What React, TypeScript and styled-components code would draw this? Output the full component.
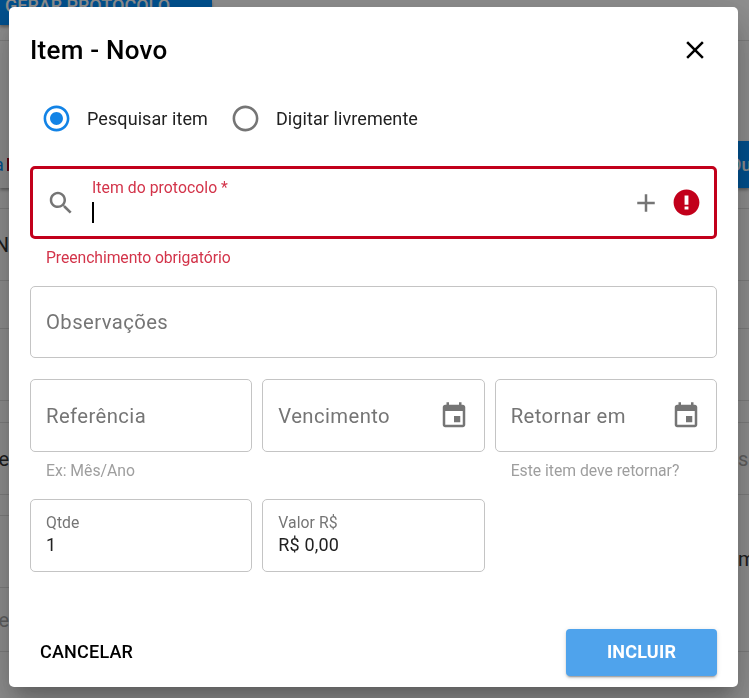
import React from "react";
import styled, { createGlobalStyle } from "styled-components";

const Global = createGlobalStyle`
  html, body { margin: 0; padding: 0; background: #fff; overflow: hidden; }
  * { box-sizing: border-box; }
  body { font-family: Roboto, "Liberation Sans", sans-serif; }
`;

const Page = styled.div`
  width: 749px;
  height: 698px;
  overflow: hidden;
  display: flex;
  flex-direction: column;
  background: #fff;
  font-size: 18px;
  color: #333;
`;

const TopStrip = styled.div`
  height: 41px;
  flex: none;
  border-bottom: 1px solid #e0e0e0;
`;

const TopButton = styled.div`
  width: 212px;
  height: 25px;
  background: #0090ff;
  color: #fff;
  font-weight: 500;
  font-size: 18px;
  line-height: 12px;
  padding-left: 5px;
  overflow: hidden;
  box-shadow: 0 2px 3px rgba(0, 0, 0, 0.35);
`;

const ToolStrip = styled.div`
  height: 168px;
  flex: none;
  padding-top: 100px;
  border-bottom: 1px solid #e0e0e0;
  display: flex;
  justify-content: space-between;
  align-items: flex-start;
`;

const GhostTool = styled.div`
  width: 60px;
  height: 47px;
  background: #fbfbfb;
  box-shadow: 0 2px 3px rgba(0, 0, 0, 0.35);
  display: flex;
  align-items: center;
  font-size: 18px;
  color: #0090ff;
  line-height: 1;
  text-indent: -6px;
`;

const GhostMark = styled.span`
  width: 3px;
  height: 13px;
  margin-left: 3px;
  background: #b0001a;
`;

const BlueTool = styled.div`
  width: 11px;
  height: 47px;
  background: #0090ff;
  color: #fff;
  font-weight: 500;
  line-height: 47px;
  white-space: nowrap;
  overflow: hidden;
  text-indent: -9px;
  box-shadow: 0 2px 3px rgba(0, 0, 0, 0.35);
`;

const Row = styled.div<{ $h: number }>`
  height: ${(p) => p.$h}px;
  flex: none;
  border-bottom: 1px solid #e0e0e0;
  display: flex;
  justify-content: space-between;
  align-items: center;
  line-height: 1;
  font-size: 20px;
`;

const PlainRow = styled.div<{ $h: number }>`
  height: ${(p) => p.$h}px;
  flex: none;
  border-bottom: 1px solid #e0e0e0;
`;

const LastRow = styled.div`
  height: 157px;
  flex: none;
  border-bottom: 1px solid #e0e0e0;
  display: flex;
  justify-content: space-between;
  align-items: flex-start;
`;

const EdgeColumn = styled.div`
  width: 9px;
  display: flex;
  flex-direction: column;
`;

const EdgeCell = styled.div<{ $h: number }>`
  height: ${(p) => p.$h}px;
  flex: none;
  border-bottom: 1px solid #e0e0e0;
  display: flex;
  align-items: center;
  font-size: 20px;
  color: #aaa;
  white-space: nowrap;
  overflow: hidden;
`;

const RightEdge = styled.span`
  width: 11px;
  overflow: hidden;
  white-space: nowrap;
  font-size: 20px;
  line-height: 1;
  margin-top: 54px;
`;

const LeftGlyph = styled.span`
  width: 9px;
  overflow: hidden;
  display: block;
  direction: rtl;
`;

const RightGlyph = styled.span`
  width: 11px;
  overflow: hidden;
  display: block;
  color: #aaa;
`;

const Backdrop = styled.div`
  position: fixed;
  inset: 0;
  background: rgba(0, 0, 0, 0.44);
`;

const Dialog = styled.section`
  position: fixed;
  left: 9px;
  top: 7px;
  width: 729px;
  height: 680px;
  background: #fff;
  border-radius: 5px;
  display: flex;
  flex-direction: column;
  padding: 0 21px 11px;
  color: #000;
  box-shadow: 0 11px 15px -7px rgba(0, 0, 0, 0.2), 0 24px 38px 3px rgba(0, 0, 0, 0.14),
    0 9px 46px 8px rgba(0, 0, 0, 0.12);
`;

const Header = styled.header`
  height: 86px;
  flex: none;
  display: flex;
  align-items: center;
  justify-content: space-between;
  padding-right: 7px;
`;

const Title = styled.h2`
  margin: 0;
  font-size: 26px;
  font-weight: 500;
  letter-spacing: 0.25px;
  color: #000;
`;

const Icon = styled.svg<{ $color?: string; $size?: number }>`
  width: ${(p) => p.$size ?? 30}px;
  height: ${(p) => p.$size ?? 30}px;
  fill: ${(p) => p.$color ?? "#757575"};
  flex: none;
  display: block;
`;

const RadioRow = styled.div`
  height: 50px;
  flex: none;
  display: flex;
  align-items: center;
  padding-left: 11px;
  margin-bottom: 23px;
`;

const RadioLabel = styled.span`
  font-size: 18px;
  letter-spacing: 0.08px;
  color: #212121;
  margin-left: 15px;
  margin-right: 22px;
`;

const Field = styled.div<{ $h?: number; $error?: boolean }>`
  height: ${(p) => p.$h ?? 73}px;
  border: ${(p) => (p.$error ? "3px solid #c2001b" : "1px solid #c4c4c4")};
  border-radius: 5px;
  display: flex;
  align-items: center;
  padding: 0 15px;
  min-width: 0;
`;

const ErrorField = styled(Field)`
  padding: 0 12px 0 13px;
`;

const ObservationField = styled(Field)`
  margin-top: 19px;
`;

const ErrorBody = styled.div`
  flex: 1;
  display: flex;
  flex-direction: column;
  align-items: flex-start;
  margin-left: 16px;
  margin-top: -4px;
`;

const ErrorLabel = styled.label`
  font-size: 15.75px;
  line-height: 18px;
  color: #d3344a;
  letter-spacing: 0.05px;
`;

const Caret = styled.span`
  width: 2px;
  height: 21px;
  margin-top: 5px;
  background: #000;
`;

const PlusSlot = styled.span`
  margin-right: 10px;
`;

const Helper = styled.p<{ $error?: boolean }>`
  margin: 0;
  padding-left: 16px;
  height: 19px;
  font-size: 15.75px;
  line-height: 19px;
  letter-spacing: ${(p) => (p.$error ? "-0.08px" : "-0.03px")};
  color: ${(p) => (p.$error ? "#d3344a" : "#9e9e9e")};
`;

const Placeholder = styled.span`
  flex: 1;
  font-size: 20.25px;
  letter-spacing: 0.42px;
  color: #757575;
`;

const Grid = styled.div<{ $gap?: number }>`
  display: grid;
  grid-template-columns: repeat(3, 1fr);
  column-gap: 10px;
  margin-top: ${(p) => p.$gap ?? 0}px;
`;

const HelperSlot = styled.div`
  padding-top: 9px;
`;

const FilledField = styled(Field)`
  flex-direction: column;
  align-items: flex-start;
  justify-content: center;
  padding-bottom: 2px;
`;

const SmallLabel = styled.span`
  font-size: 15.75px;
  line-height: 19px;
  margin-bottom: 1px;
  letter-spacing: 0.05px;
  color: #757575;
`;

const Value = styled.span`
  font-size: 18px;
  line-height: 24px;
  letter-spacing: 0.17px;
  color: #212121;
`;

const Footer = styled.footer`
  margin-top: auto;
  display: flex;
  justify-content: space-between;
  align-items: center;
`;

const CancelButton = styled.button`
  border: 0;
  background: transparent;
  padding: 0 10px 2px;
  height: 47px;
  font-family: inherit;
  font-size: 18px;
  font-weight: 500;
  letter-spacing: 0.2px;
  color: #000;
`;

const ConfirmButton = styled.button`
  width: 151px;
  height: 47px;
  border: 0;
  border-radius: 4px;
  padding: 0 0 2px;
  background: #4fa3ec;
  color: #fff;
  font-family: inherit;
  font-size: 18px;
  font-weight: 700;
  letter-spacing: 0.2px;
  box-shadow: 0 3px 1px -2px rgba(0, 0, 0, 0.2), 0 2px 2px 0 rgba(0, 0, 0, 0.14),
    0 1px 5px 0 rgba(0, 0, 0, 0.12);
`;

const paths = {
  close: "M19 6.41L17.59 5 12 10.59 6.41 5 5 6.41 10.59 12 5 17.59 6.41 19 12 13.41 17.59 19 19 17.59 13.41 12z",
  search:
    "M15.5 14h-.79l-.28-.27C15.41 12.59 16 11.11 16 9.5 16 5.91 13.09 3 9.5 3S3 5.91 3 9.5 5.91 16 9.5 16c1.61 0 3.09-.59 4.23-1.57l.27.28v.79l5 4.99L20.49 19l-4.99-5zm-6 0C7.01 14 5 11.99 5 9.5S7.01 5 9.5 5 14 7.01 14 9.5 11.99 14 9.5 14z",
  plus: "M19 13h-6v6h-2v-6H5v-2h6V5h2v6h6v2z",
  error:
    "M12 2C6.48 2 2 6.48 2 12s4.48 10 10 10 10-4.48 10-10S17.52 2 12 2zm1.5 15.4h-3V15h3v2.4zm0-3.7h-3V6.6h3v7.1z",
  event:
    "M17 12h-5v5h5v-5zM16 1v2H8V1H6v2H5c-1.11 0-1.99.9-1.99 2L3 19c0 1.1.89 2 2 2h14c1.1 0 2-.9 2-2V5c0-1.1-.9-2-2-2h-1V1h-2zm3 18H5V8h14v11z",
  radioOn:
    "M12 2C6.48 2 2 6.48 2 12s4.48 10 10 10 10-4.48 10-10S17.52 2 12 2zm0 18c-4.42 0-8-3.58-8-8s3.58-8 8-8 8 3.58 8 8-3.58 8-8 8zM12 7c-2.76 0-5 2.24-5 5s2.24 5 5 5 5-2.24 5-5-2.24-5-5-5z",
  radioOff:
    "M12 2C6.48 2 2 6.48 2 12s4.48 10 10 10 10-4.48 10-10S17.52 2 12 2zm0 18c-4.42 0-8-3.58-8-8s3.58-8 8-8 8 3.58 8 8-3.58 8-8 8z",
};

const Glyph = ({ d, color, size }: { d: string; color?: string; size?: number }) => (
  <Icon viewBox="0 0 24 24" $color={color} $size={size} aria-hidden="true">
    <path d={d} />
  </Icon>
);

export default function App() {
  return (
    <>
      <Global />
      <Page>
        <TopStrip>
          <TopButton>GERAR PROTOCOLO</TopButton>
        </TopStrip>
        <ToolStrip>
          <GhostTool>
            a<GhostMark />
          </GhostTool>
          <BlueTool>Ou</BlueTool>
        </ToolStrip>
        <Row $h={72}>
          <LeftGlyph>N</LeftGlyph>
        </Row>
        <PlainRow $h={48} />
        <PlainRow $h={72} />
        <PlainRow $h={22} />
        <Row $h={72}>
          <LeftGlyph>e</LeftGlyph>
          <RightGlyph>s</RightGlyph>
        </Row>
        <LastRow>
          <EdgeColumn>
            <EdgeCell $h={21} />
            <EdgeCell $h={72} />
            <EdgeCell $h={64}>
              <LeftGlyph>e</LeftGlyph>
            </EdgeCell>
          </EdgeColumn>
          <RightEdge>m</RightEdge>
        </LastRow>
      </Page>
      <Backdrop />
      <Dialog role="dialog">
        <Header>
          <Title>Item - Novo</Title>
          <Glyph d={paths.close} color="#000" />
        </Header>
        <RadioRow>
          <Glyph d={paths.radioOn} color="#1283e6" size={31} />
          <RadioLabel>Pesquisar item</RadioLabel>
          <Glyph d={paths.radioOff} color="#757575" size={31} />
          <RadioLabel>Digitar livremente</RadioLabel>
        </RadioRow>
        <ErrorField $error>
          <Glyph d={paths.search} />
          <ErrorBody>
            <ErrorLabel>Item do protocolo *</ErrorLabel>
            <Caret />
          </ErrorBody>
          <PlusSlot>
            <Glyph d={paths.plus} />
          </PlusSlot>
          <Glyph d={paths.error} color="#c2001b" size={31} />
        </ErrorField>
        <HelperSlot>
          <Helper $error>Preenchimento obrigatório</Helper>
        </HelperSlot>
        <ObservationField $h={72}>
          <Placeholder>Observações</Placeholder>
        </ObservationField>
        <Grid $gap={21}>
          <Field>
            <Placeholder>Referência</Placeholder>
          </Field>
          <Field>
            <Placeholder>Vencimento</Placeholder>
            <Glyph d={paths.event} />
          </Field>
          <Field>
            <Placeholder>Retornar em</Placeholder>
            <Glyph d={paths.event} />
          </Field>
          <HelperSlot>
            <Helper>Ex: Mês/Ano</Helper>
          </HelperSlot>
          <HelperSlot />
          <HelperSlot>
            <Helper>Este item deve retornar?</Helper>
          </HelperSlot>
        </Grid>
        <Grid $gap={19}>
          <FilledField>
            <SmallLabel>Qtde</SmallLabel>
            <Value>1</Value>
          </FilledField>
          <FilledField>
            <SmallLabel>Valor R$</SmallLabel>
            <Value>R$ 0,00</Value>
          </FilledField>
        </Grid>
        <Footer>
          <CancelButton>CANCELAR</CancelButton>
          <ConfirmButton>INCLUIR</ConfirmButton>
        </Footer>
      </Dialog>
    </>
  );
}
